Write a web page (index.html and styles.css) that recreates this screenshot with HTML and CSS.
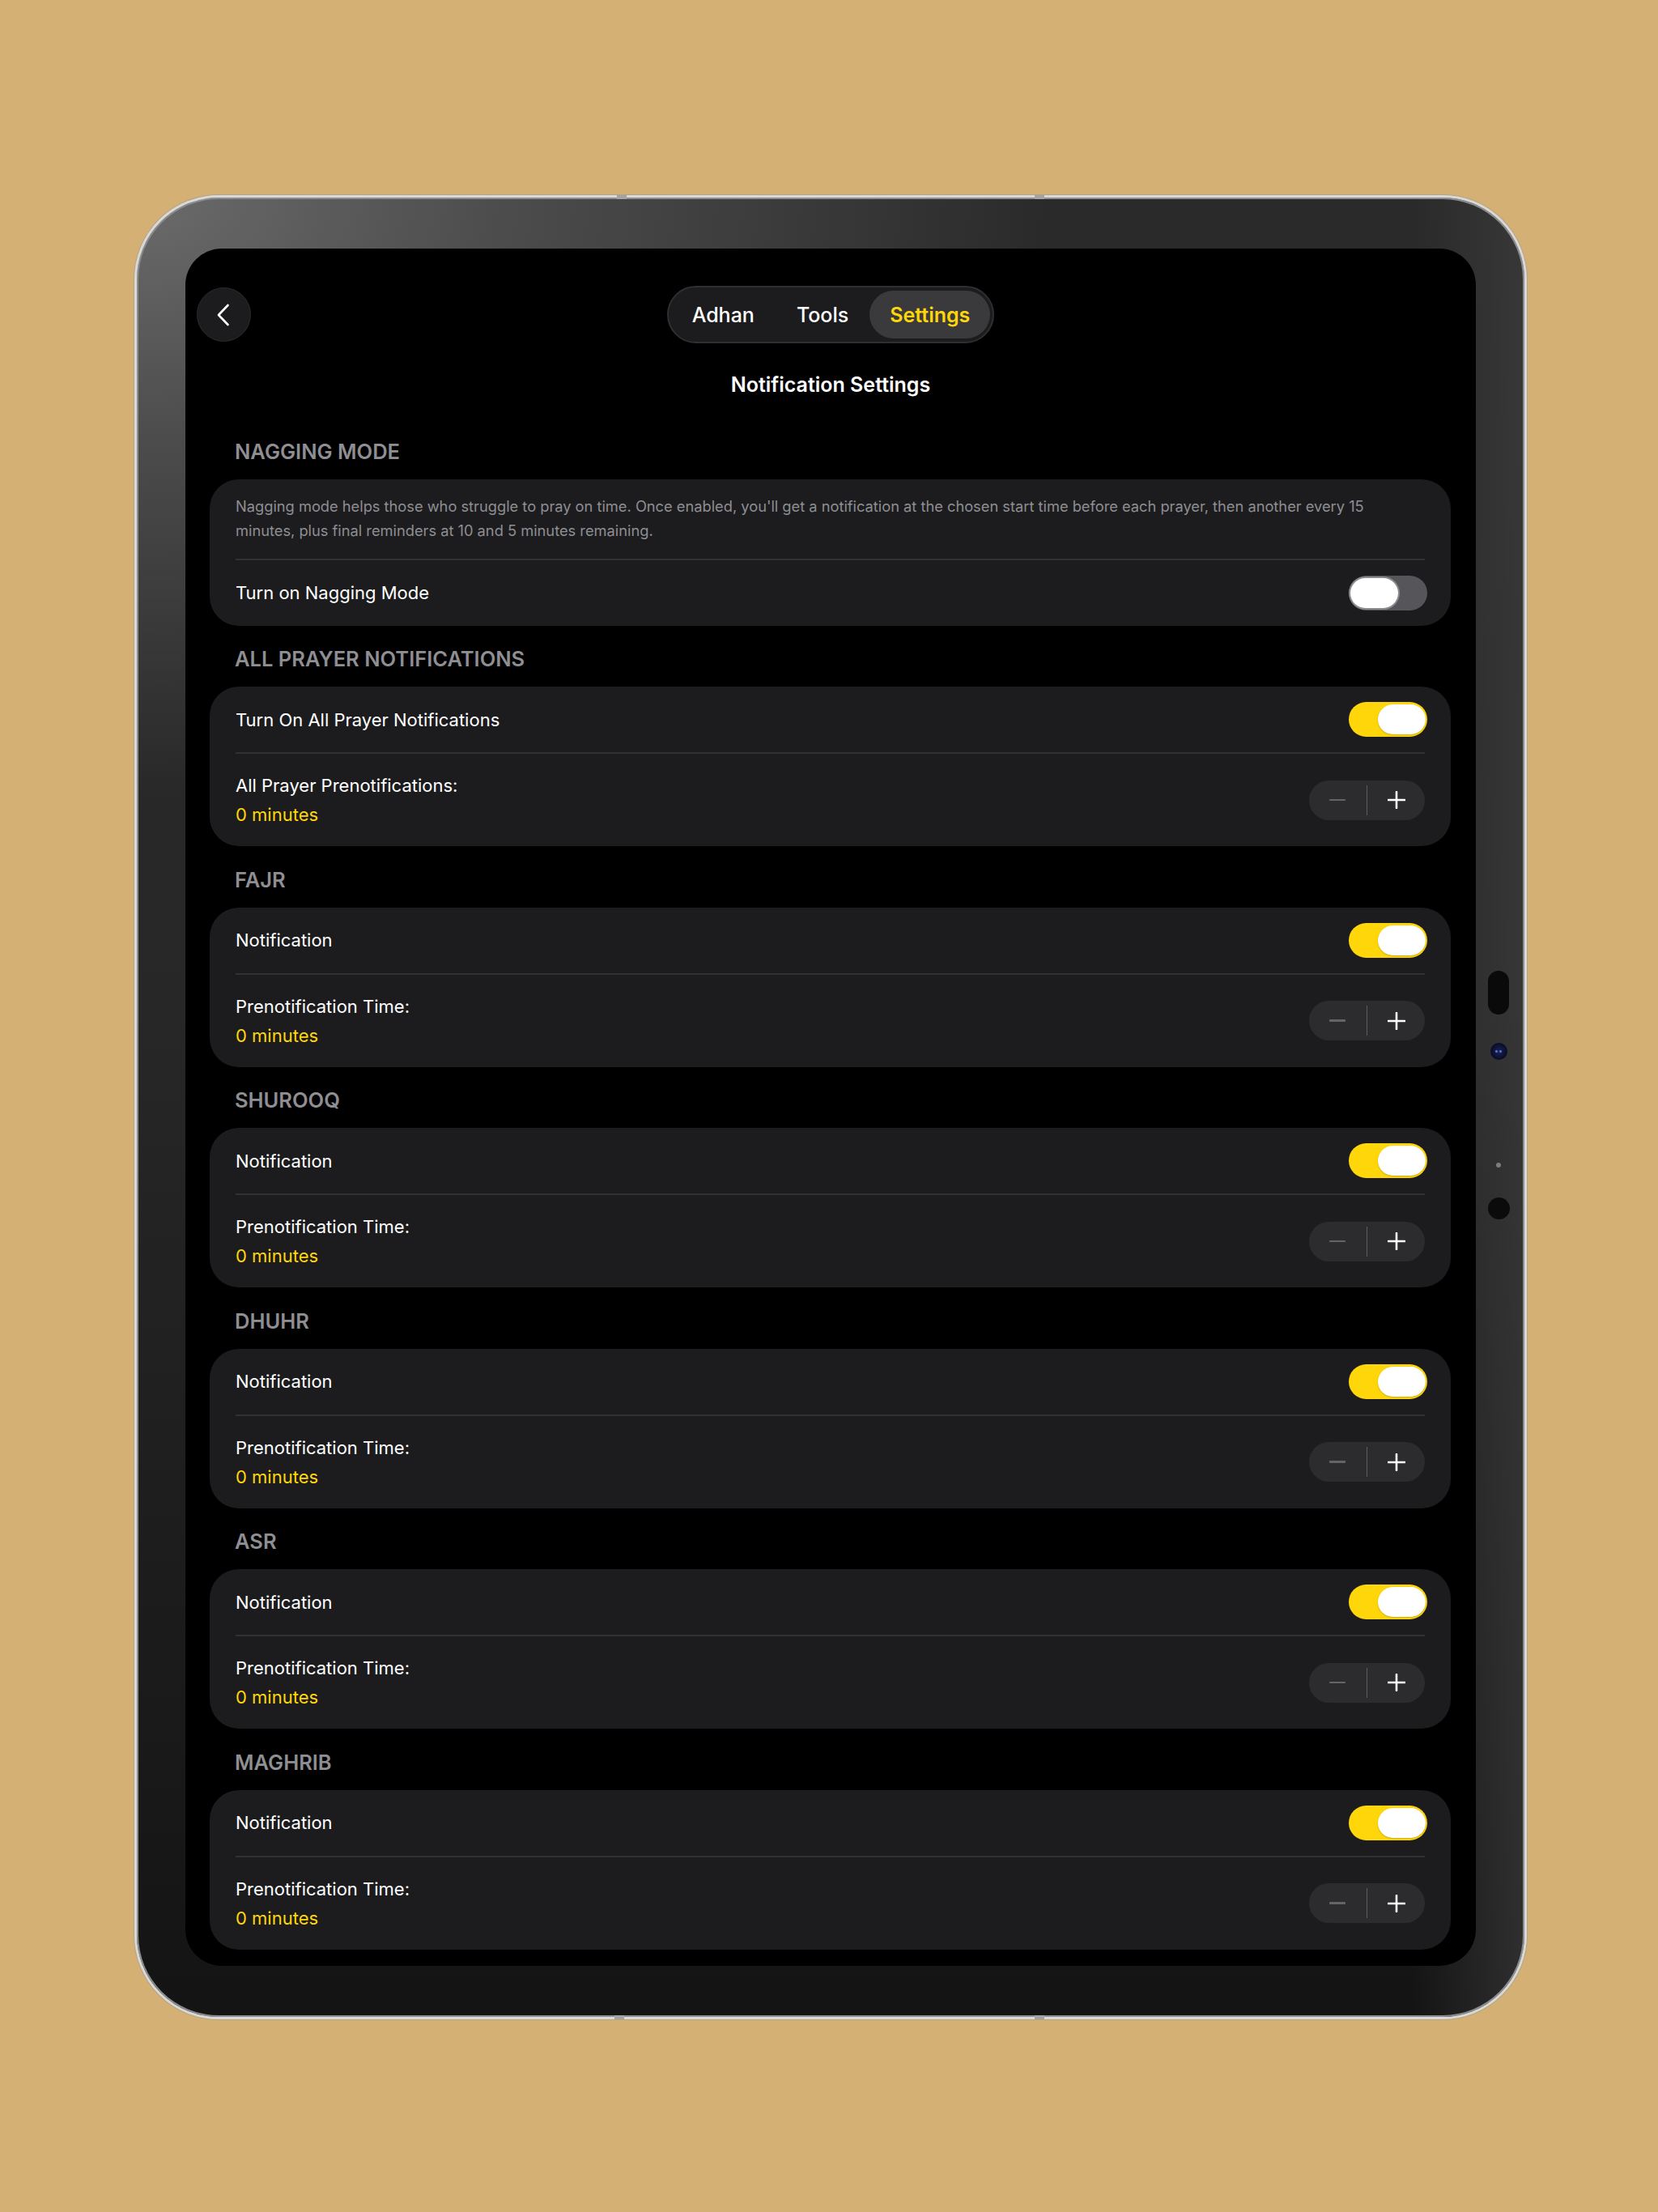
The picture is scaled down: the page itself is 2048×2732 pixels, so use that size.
FILE: index.html
```html
<!DOCTYPE html>
<html lang="en">
<head>
<meta charset="utf-8">
<title>Notification Settings</title>
<link rel="stylesheet" href="styles.css">
</head>
<body>
<div class="device">
  <span class="edge-mark mark-top-a"></span>
  <span class="edge-mark mark-top-b"></span>
  <span class="edge-mark mark-bottom-a"></span>
  <span class="edge-mark mark-bottom-b"></span>
  <div class="sensors">
    <span class="sensor-oval"></span>
    <span class="sensor-lens"><span class="glint"></span><span class="glint"></span></span>
    <span class="sensor-dot"></span>
    <span class="sensor-hole"></span>
  </div>
  <div class="screen">
    <header class="topbar">
      <button class="back" aria-label="Back">
        <svg width="18" height="28" viewBox="0 0 18 28"><path d="M14.5 2 L3 14 L14.5 26" fill="none" stroke="#ffffff" stroke-width="2.6" stroke-linecap="round" stroke-linejoin="round"/></svg>
      </button>
      <nav class="segmented">
        <span class="seg-item">Adhan</span>
        <span class="seg-item">Tools</span>
        <span class="seg-item is-active">Settings</span>
      </nav>
    </header>
    <h1 class="title">Notification Settings</h1>
    <main class="sections">
      <section class="section">
        <h2 class="section-header">Nagging Mode</h2>
        <div class="card">
          <p class="card-desc">Nagging mode helps those who struggle to pray on time. Once enabled, you'll get a notification at the chosen start time before each prayer, then another every 15 minutes, plus final reminders at 10 and 5 minutes remaining.</p>
          <div class="row row-toggle">
            <span class="row-label">Turn on Nagging Mode</span>
            <span class="toggle off"><span class="knob"></span></span>
          </div>
        </div>
      </section>

      <section class="section">
        <h2 class="section-header">All Prayer Notifications</h2>
        <div class="card">
          <div class="row row-toggle">
            <span class="row-label">Turn On All Prayer Notifications</span>
            <span class="toggle"><span class="knob"></span></span>
          </div>
          <div class="row row-stepper">
            <div class="row-text">
              <span class="row-label">All Prayer Prenotifications:</span>
              <span class="row-value">0 minutes</span>
            </div>
            <div class="stepper">
              <span class="step"><span class="minus"></span></span>
              <span class="step-divider"></span>
              <span class="step"><svg width="22" height="22" viewBox="0 0 22 22"><path d="M11 1 V21 M1 11 H21" stroke="#ffffff" stroke-width="2.6" stroke-linecap="round"/></svg></span>
            </div>
          </div>
        </div>
      </section>

      <section class="section">
        <h2 class="section-header">Fajr</h2>
        <div class="card">
          <div class="row row-toggle">
            <span class="row-label">Notification</span>
            <span class="toggle"><span class="knob"></span></span>
          </div>
          <div class="row row-stepper">
            <div class="row-text">
              <span class="row-label">Prenotification Time:</span>
              <span class="row-value">0 minutes</span>
            </div>
            <div class="stepper">
              <span class="step"><span class="minus"></span></span>
              <span class="step-divider"></span>
              <span class="step"><svg width="22" height="22" viewBox="0 0 22 22"><path d="M11 1 V21 M1 11 H21" stroke="#ffffff" stroke-width="2.6" stroke-linecap="round"/></svg></span>
            </div>
          </div>
        </div>
      </section>

      <section class="section">
        <h2 class="section-header">Shurooq</h2>
        <div class="card">
          <div class="row row-toggle">
            <span class="row-label">Notification</span>
            <span class="toggle"><span class="knob"></span></span>
          </div>
          <div class="row row-stepper">
            <div class="row-text">
              <span class="row-label">Prenotification Time:</span>
              <span class="row-value">0 minutes</span>
            </div>
            <div class="stepper">
              <span class="step"><span class="minus"></span></span>
              <span class="step-divider"></span>
              <span class="step"><svg width="22" height="22" viewBox="0 0 22 22"><path d="M11 1 V21 M1 11 H21" stroke="#ffffff" stroke-width="2.6" stroke-linecap="round"/></svg></span>
            </div>
          </div>
        </div>
      </section>

      <section class="section">
        <h2 class="section-header">Dhuhr</h2>
        <div class="card">
          <div class="row row-toggle">
            <span class="row-label">Notification</span>
            <span class="toggle"><span class="knob"></span></span>
          </div>
          <div class="row row-stepper">
            <div class="row-text">
              <span class="row-label">Prenotification Time:</span>
              <span class="row-value">0 minutes</span>
            </div>
            <div class="stepper">
              <span class="step"><span class="minus"></span></span>
              <span class="step-divider"></span>
              <span class="step"><svg width="22" height="22" viewBox="0 0 22 22"><path d="M11 1 V21 M1 11 H21" stroke="#ffffff" stroke-width="2.6" stroke-linecap="round"/></svg></span>
            </div>
          </div>
        </div>
      </section>

      <section class="section">
        <h2 class="section-header">Asr</h2>
        <div class="card">
          <div class="row row-toggle">
            <span class="row-label">Notification</span>
            <span class="toggle"><span class="knob"></span></span>
          </div>
          <div class="row row-stepper">
            <div class="row-text">
              <span class="row-label">Prenotification Time:</span>
              <span class="row-value">0 minutes</span>
            </div>
            <div class="stepper">
              <span class="step"><span class="minus"></span></span>
              <span class="step-divider"></span>
              <span class="step"><svg width="22" height="22" viewBox="0 0 22 22"><path d="M11 1 V21 M1 11 H21" stroke="#ffffff" stroke-width="2.6" stroke-linecap="round"/></svg></span>
            </div>
          </div>
        </div>
      </section>

      <section class="section">
        <h2 class="section-header">Maghrib</h2>
        <div class="card">
          <div class="row row-toggle">
            <span class="row-label">Notification</span>
            <span class="toggle"><span class="knob"></span></span>
          </div>
          <div class="row row-stepper">
            <div class="row-text">
              <span class="row-label">Prenotification Time:</span>
              <span class="row-value">0 minutes</span>
            </div>
            <div class="stepper">
              <span class="step"><span class="minus"></span></span>
              <span class="step-divider"></span>
              <span class="step"><svg width="22" height="22" viewBox="0 0 22 22"><path d="M11 1 V21 M1 11 H21" stroke="#ffffff" stroke-width="2.6" stroke-linecap="round"/></svg></span>
            </div>
          </div>
        </div>
      </section>
    </main>
  </div>
</div>
</body>
</html>
```

FILE: styles.css
```css
* {
  box-sizing: border-box;
}

html,
body {
  margin: 0;
  padding: 0;
}

body {
  width: 2048px;
  height: 2732px;
  overflow: hidden;
  background: #d4b074;
  font-family: "Inter", "Roboto", "Noto Sans", sans-serif;
  padding: 241px 0 0 166px;
}

/* ---------- device frame ---------- */
.device {
  position: relative;
  width: 1720px;
  height: 2253px;
  border-radius: 104px;
  border: 3px solid #d9d9d9;
  padding: 63px 60px;
  background:
    radial-gradient(110% 55% at 0% 0%, #6b6b6b 0%, #4b4b4b 25%, rgba(48, 48, 48, 0) 60%),
    linear-gradient(90deg, rgba(0, 0, 0, 0) 92%, rgba(64, 64, 64, 0.6) 100%),
    linear-gradient(180deg, #2a2a2a 0%, #272727 45%, #141414 100%);
  box-shadow: inset 0 0 0 2px #8c8c8c, 0 0 0 1px rgba(150, 150, 150, 0.5);
}

.edge-mark {
  position: absolute;
  width: 12px;
  height: 5px;
  background: #a3a3a3;
}

.mark-top-a { top: -3px; left: 593px; }
.mark-top-b { top: -3px; left: 1109px; }
.mark-bottom-a { bottom: -3px; left: 590px; }
.mark-bottom-b { bottom: -3px; left: 1109px; }

.sensors {
  position: absolute;
  top: 955px;
  right: 17px;
  width: 30px;
  display: flex;
  flex-direction: column;
  align-items: center;
}

.sensor-oval {
  width: 26px;
  height: 54px;
  border-radius: 13px;
  background: #0a0a0a;
}

.sensor-lens {
  margin-top: 35px;
  width: 21px;
  height: 21px;
  border-radius: 50%;
  background: radial-gradient(circle at 50% 50%, #1c2456 0%, #0d1030 55%, #060606 100%);
  display: flex;
  align-items: center;
  justify-content: center;
  gap: 2px;
}

.glint {
  width: 3px;
  height: 3px;
  border-radius: 50%;
  background: #5c78d8;
}

.sensor-dot {
  margin-top: 127px;
  width: 6px;
  height: 6px;
  border-radius: 50%;
  background: #7c7c7c;
}

.sensor-hole {
  margin-top: 37px;
  width: 27px;
  height: 27px;
  border-radius: 50%;
  background: #0b0b0b;
}

/* ---------- screen ---------- */
.screen {
  width: 100%;
  height: 100%;
  background: #000;
  border-radius: 45px;
  overflow: hidden;
  color: #fff;
}

.topbar {
  display: grid;
  grid-template-columns: 1fr auto 1fr;
  align-items: center;
  padding-top: 46px;
}

.back {
  justify-self: start;
  margin-left: 14px;
  width: 67px;
  height: 67px;
  padding: 0 2px 0 0;
  border-radius: 50%;
  background: #1c1c1e;
  border: 1.5px solid #2c2c2e;
  display: flex;
  align-items: center;
  justify-content: center;
}

.segmented {
  display: flex;
  height: 71px;
  padding: 4px 3px;
  border-radius: 36px;
  background: #1c1c1e;
  border: 2px solid #2f2f31;
}

.seg-item {
  display: flex;
  align-items: center;
  padding: 0 26px;
  border-radius: 30px;
  font-size: 25px;
  font-weight: 500;
  color: #fff;
}

.seg-item.is-active {
  padding: 0 25px;
  background: #3a3a3c;
  color: #ffd60a;
  font-weight: 600;
}

.title {
  margin: 36px 0 0;
  text-align: center;
  font-size: 25px;
  line-height: 30px;
  font-weight: 600;
}

/* ---------- sections ---------- */
.sections {
  padding: 26px 31px 0 30px;
}

.section {
  margin-top: 27.5px;
}

.section-header {
  margin: 0 0 20px;
  padding-left: 31px;
  font-size: 25.5px;
  line-height: 28px;
  font-weight: 600;
  color: #8e8e93;
  text-transform: uppercase;
}

.card {
  background: #1c1c1e;
  border-radius: 36px;
  padding: 0 32px;
}

.card-desc {
  margin: 0;
  padding: 18px 0 20px;
  font-size: 18.25px;
  line-height: 30px;
  color: #8e8e93;
}

.row {
  display: flex;
  align-items: center;
  justify-content: space-between;
}

.row + .row,
.card-desc + .row {
  border-top: 2px solid #313134;
}

.row-toggle {
  padding: 19px 0;
}

.row-stepper {
  padding: 21px 0;
}

.row-label {
  font-size: 22px;
  line-height: 30px;
  color: #fff;
}

.row-text {
  display: flex;
  flex-direction: column;
}

.row-text .row-label,
.row-value {
  line-height: 36px;
}

.row-value {
  font-size: 22px;
  color: #ffd60a;
}

/* toggle */
.toggle {
  flex: none;
  display: flex;
  justify-content: flex-end;
  align-items: center;
  width: 97px;
  height: 43px;
  margin-right: -3px;
  padding: 3px 2px;
  border-radius: 22px;
  background: #ffd60a;
}

.knob {
  width: 59px;
  height: 37px;
  border-radius: 19px;
  background: #fff;
  box-shadow: 0 1px 2px rgba(0, 0, 0, 0.2);
}

.toggle.off {
  justify-content: flex-start;
  background: #56565a;
}

.toggle.off .knob {
  box-shadow: 0 0 0 2px #8a8a8e;
}

/* stepper */
.stepper {
  flex: none;
  display: flex;
  align-items: center;
  width: 143px;
  height: 49px;
  border-radius: 25px;
  background: #2c2c2e;
}

.step {
  flex: 1;
  height: 100%;
  display: flex;
  align-items: center;
  justify-content: center;
}

.step-divider {
  width: 1.5px;
  height: 37px;
  background: #5e5e62;
}

.minus {
  width: 20px;
  height: 2.5px;
  border-radius: 1px;
  background: #646468;
}
```
